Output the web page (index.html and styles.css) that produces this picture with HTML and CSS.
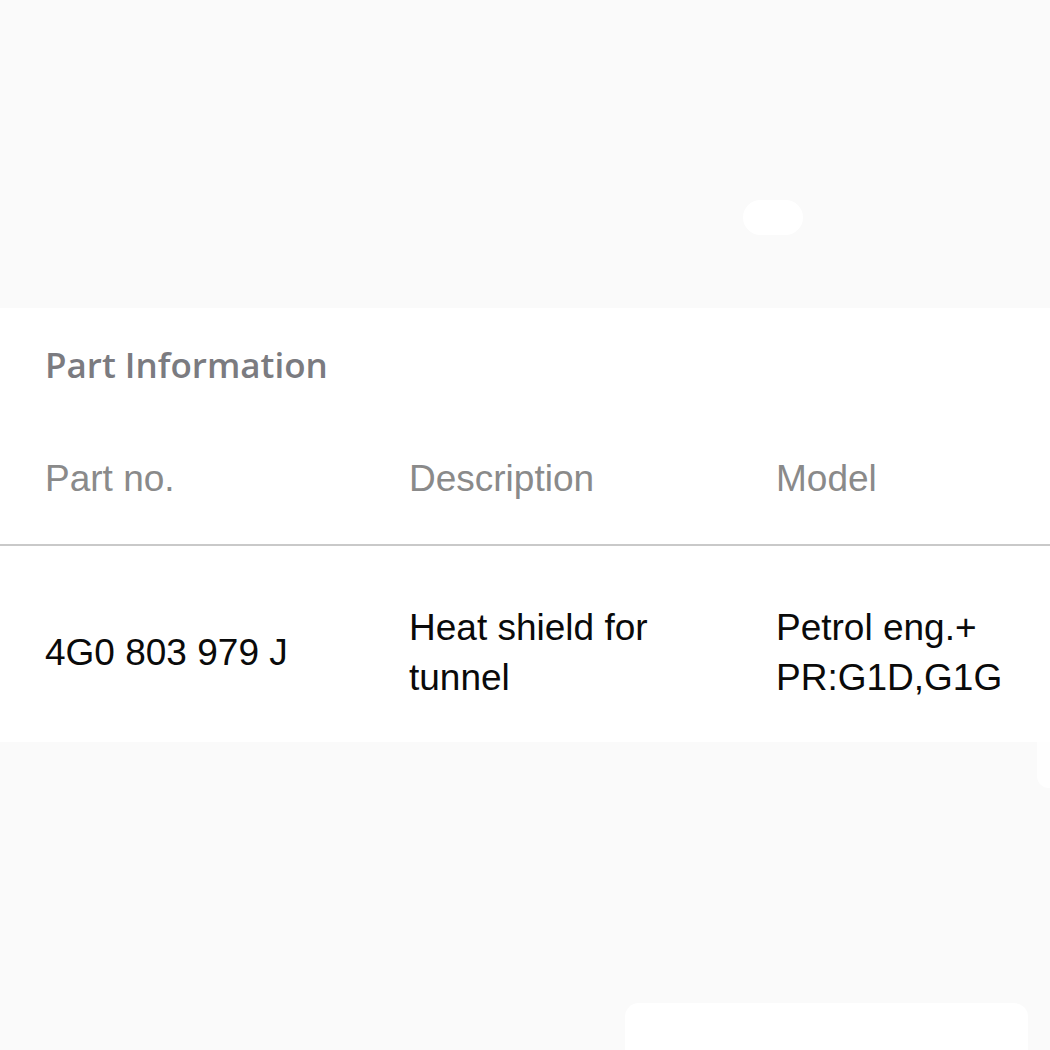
FILE: index.html
```html
<!doctype html>
<html lang="en">
  <head>
    <meta charset="UTF-8" />
    <meta name="viewport" content="width=device-width, initial-scale=1.0" />
    <title>Part Information</title>
    <link rel="stylesheet" href="styles.css">
  </head>
  <body>
    <div class="top-bar">
      <span class="pill"></span>
    </div>

    <!-- Part info card -->
    <div class="card">
      <h2 class="card-title">Part Information</h2>
      <div class="table">
        <div class="row head">
          <div class="cell">Part no.</div>
          <div class="cell">Description</div>
          <div class="cell">Model</div>
        </div>
        <div class="row body-row">
          <div class="cell">4G0 803 979 J</div>
          <div class="cell">Heat shield for<br />tunnel</div>
          <div class="cell">Petrol eng.+<br />PR:G1D,G1G</div>
        </div>
      </div>
    </div>

    <div class="side-strip">
      <span class="side-tab"></span>
    </div>

    <div class="bottom-area">
      <div class="bottom-panel"></div>
    </div>
  </body>
</html>
```

FILE: styles.css
```css
body {
  margin: 0;
  background-color: #fafafa;
  font-family: "Liberation Sans", Arial, sans-serif;
  color: #111;
}
.top-bar {
  height: 308px;
  display: flex;
  padding: 200px 0 0 743px;
  box-sizing: border-box;
}
.pill {
  width: 60px;
  height: 35px;
  border-radius: 18px;
  background-color: #fff;
}
.card {
  background-color: #fff;
  padding-top: 35px;
}
.card-title {
  margin: 0;
  padding-left: 45px;
  font-family: "Open Sans", sans-serif;
  font-size: 35px;
  font-weight: 600;
  line-height: 43px;
  color: #7b7b80;
}
.table {
  margin-top: 71px;
}
.row {
  display: grid;
  grid-template-columns: 364px 367px 1fr;
  padding-left: 45px;
}
.cell {
  font-size: 37px;
}
.head {
  line-height: 44px;
  color: #8a8a8a;
  padding-bottom: 43px;
  border-bottom: 2px solid #c9c9c9;
}
.body-row {
  line-height: 50px;
  align-items: center;
  padding: 57px 0 39px 45px;
  color: #0a0a0a;
}
.side-strip {
  display: flex;
  justify-content: flex-end;
}
.side-tab {
  width: 13px;
  height: 46px;
  background-color: #fefefe;
  border-bottom-left-radius: 12px;
}
.bottom-area {
  display: flex;
  padding: 215px 0 0 625px;
}
.bottom-panel {
  width: 403px;
  height: 60px;
  background-color: #fff;
  border-radius: 14px 14px 0 0;
}
```
